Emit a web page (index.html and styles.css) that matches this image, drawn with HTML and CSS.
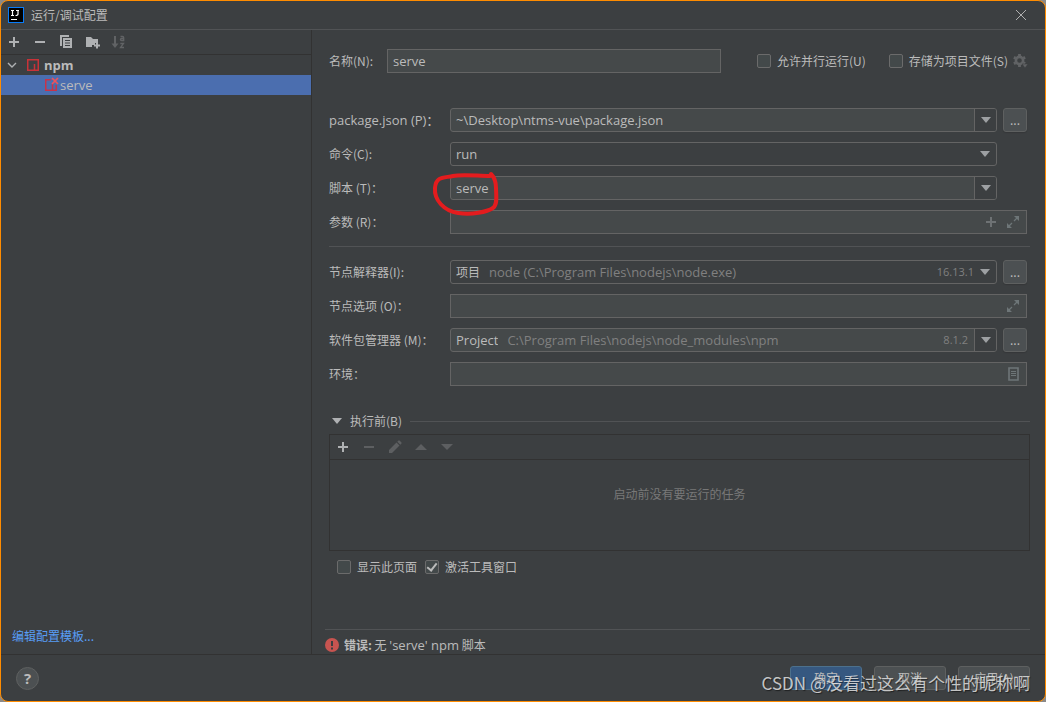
FILE: index.html
```html
<!DOCTYPE html>
<html lang="zh-CN">
<head>
<meta charset="utf-8">
<title>运行/调试配置</title>
<link rel="stylesheet" href="styles.css">
</head>
<body>
<div class="window">
  <header class="titlebar">
    <svg class="logo" width="16" height="16" viewBox="0 0 16 16"><rect width="16" height="16" fill="#087cfa"/><rect x="1" y="1" width="14" height="14" fill="#000"/><path d="M3 3.500h3M4.500 3.500v5M3 8.500h3M8 3.500h3M10 3.500v3.500q0 1.500-2.500 1.500M3 12.500h6" fill="none" stroke="#fff" stroke-width="1.200"/></svg>
    <h1 class="title">运行/调试配置</h1>
    <button class="icon-btn close" aria-label="关闭"><svg width="12" height="12" viewBox="0 0 12 12"><path d="M1 1l10 10M11 1L1 11" stroke="#b0b0b0"/></svg></button>
  </header>

  <div class="body">
    <aside class="sidebar">
      <div class="toolbar">
        <button class="icon-btn" aria-label="添加"><svg width="16" height="16" viewBox="0 0 16 16"><path d="M8 3v10M3 8h10" stroke="#afb1b3" stroke-width="2"/></svg></button>
        <button class="icon-btn" aria-label="移除"><svg width="16" height="16" viewBox="0 0 16 16"><path d="M3 8h10" stroke="#afb1b3" stroke-width="2"/></svg></button>
        <button class="icon-btn" aria-label="复制"><svg width="16" height="16" viewBox="0 0 16 16"><path d="M2 1h9v2H4v9H2z" fill="#afb1b3"/><path fill-rule="evenodd" d="M5 4h9v10H5zM7 6v1h5V6zM7 8.500v1h5v-1zM7 11v1h5v-1z" fill="#afb1b3"/></svg></button>
        <button class="icon-btn" aria-label="新建文件夹"><svg width="16" height="16" viewBox="0 0 16 16"><path d="M2 3h5l2 2h5v4h-3v2H8v2H2z" fill="#afb1b3"/><path d="M13 8.500v6M10 11.500h6" stroke="#afb1b3" stroke-width="2"/></svg></button>
        <button class="icon-btn" aria-label="排序" disabled><svg width="16" height="16" viewBox="0 0 16 16"><path d="M5 2v9" stroke="#616365" stroke-width="2"/><path d="M1.500 9.500h7L5 14z" fill="#616365"/><path d="M10.500 2.500h2q1.200 0 1.200 1.200V6.500h-2q-1.300 0-1.300-1t1.300-1h2M10.300 9.500h3.200L10.500 13.500H14" fill="none" stroke="#616365" stroke-width="1.300"/></svg></button>
      </div>
      <ul class="tree">
        <li class="node">
          <svg class="twisty" width="10" height="10" viewBox="0 0 10 10"><path d="M1 3l4 4 4-4" fill="none" stroke="#afb1b3" stroke-width="1.400"/></svg>
          <svg width="16" height="16" viewBox="0 0 16 16"><path d="M2.750 2.750h10.500v10.500H9.500V7" fill="none" stroke="#c93238" stroke-width="1.500"/><path d="M2.750 2v11.250H10" fill="none" stroke="#c93238" stroke-width="1.500"/></svg>
          <strong>npm</strong>
        </li>
        <li class="node child selected">
          <svg width="16" height="16" viewBox="0 0 16 16"><path d="M8 2.750H2.750v10.500h10.500V8M9.500 13V7" fill="none" stroke="#c93248" stroke-width="1.500"/><path d="M9 1l6 6M15 1L9 7" stroke="#f0525a" stroke-width="1.700"/></svg>
          <span>serve</span>
        </li>
      </ul>
      <a class="link" href="#templates">编辑配置模板...</a>
    </aside>

    <main class="main">
      <div class="name-row">
        <label class="name-label" for="name">名称(N):</label>
        <input class="field name-input" id="name" type="text" value="serve">
        <label class="check parallel"><input type="checkbox">允许并行运行(U)</label>
        <label class="check"><input type="checkbox">存储为项目文件(S)</label>
        <button class="icon-btn gear" aria-label="存储设置" disabled><svg width="16" height="16" viewBox="0 0 16 16"><circle cx="7.500" cy="7.500" r="3.600" fill="none" stroke="#616365" stroke-width="2.600"/><path d="M7.500 1v2M7.500 12v2M1.900 4.250l1.700 1M11.400 9.750l1.700 1M1.900 10.750l1.700-1M11.400 5.250l1.700-1" stroke="#616365" stroke-width="2.800"/><path d="M10 11h6l-3 4z" fill="#616365" stroke="#3c3f41" stroke-width=".6"/></svg></button>
      </div>

      <div class="rows">
        <div class="row">
          <label class="row-label latin" for="pkg">package.json (P)：</label>
          <div class="combo editable">
            <input id="pkg" type="text" value="~\Desktop\ntms-vue\package.json">
            <button class="drop" aria-label="展开"><svg width="10" height="6" viewBox="0 0 10 6"><path d="M0 0h10L5 6z" fill="#9da0a3"/></svg></button>
          </div>
          <button class="more" aria-label="浏览">...</button>
        </div>
        <div class="row">
          <label class="row-label" for="cmd">命令(C):</label>
          <div class="combo">
            <select class="wide" id="cmd"><option>run</option></select>
            <span class="arrow"><svg width="10" height="6" viewBox="0 0 10 6"><path d="M0 0h10L5 6z" fill="#9da0a3"/></svg></span>
          </div>
          <span class="slot"></span>
        </div>
        <div class="row">
          <label class="row-label" for="script">脚本 (T)：</label>
          <div class="combo editable">
            <input id="script" type="text" value="serve">
            <button class="drop" aria-label="展开"><svg width="10" height="6" viewBox="0 0 10 6"><path d="M0 0h10L5 6z" fill="#9da0a3"/></svg></button>
            <svg class="scribble" width="70" height="50" viewBox="0 0 70 50"><path d="M59 4C62 7 64 11 64 18S66 34 61 38C55 42 40 45 26 43S2 30 3 18 12 8 21 6 46 6 58 6" fill="none" stroke="#e41c1e" stroke-width="4" stroke-linecap="round" stroke-linejoin="round"/></svg>
          </div>
          <span class="slot"></span>
        </div>
        <div class="row">
          <label class="row-label" for="args">参数 (R)：</label>
          <div class="combo box">
            <input id="args" type="text">
            <button class="icon-btn" aria-label="插入宏"><svg width="16" height="16" viewBox="0 0 16 16"><path d="M8 3v10M3 8h10" stroke="#6e7274" stroke-width="2"/></svg></button>
            <button class="icon-btn" aria-label="展开输入框"><svg width="16" height="16" viewBox="0 0 16 16"><path d="M9 2h5v5zM2 9v5h5z" fill="#6e7678"/><path d="M12.500 3.500L9 7M3.500 12.500L7 9" stroke="#6e7678" stroke-width="1.300"/></svg></button>
          </div>
        </div>
      </div>

      <hr class="rule">

      <div class="rows">
        <div class="row">
          <label class="row-label" for="node">节点解释器(I):</label>
          <div class="combo">
            <select id="node"><option>项目</option></select>
            <span class="hint">node (C:\Program Files\nodejs\node.exe)</span>
            <span class="version tight">16.13.1</span>
            <span class="arrow"><svg width="10" height="6" viewBox="0 0 10 6"><path d="M0 0h10L5 6z" fill="#9da0a3"/></svg></span>
          </div>
          <button class="more" aria-label="浏览">...</button>
        </div>
        <div class="row">
          <label class="row-label" for="opts">节点选项 (O)：</label>
          <div class="combo box">
            <input id="opts" type="text">
            <button class="icon-btn" aria-label="展开输入框"><svg width="16" height="16" viewBox="0 0 16 16"><path d="M9 2h5v5zM2 9v5h5z" fill="#6e7678"/><path d="M12.500 3.500L9 7M3.500 12.500L7 9" stroke="#6e7678" stroke-width="1.300"/></svg></button>
          </div>
        </div>
        <div class="row">
          <label class="row-label" for="pm">软件包管理器 (M)：</label>
          <div class="combo editable">
            <select id="pm"><option>Project</option></select>
            <span class="hint">C:\Program Files\nodejs\node_modules\npm</span>
            <span class="version">8.1.2</span>
            <button class="drop" aria-label="展开"><svg width="10" height="6" viewBox="0 0 10 6"><path d="M0 0h10L5 6z" fill="#9da0a3"/></svg></button>
          </div>
          <button class="more" aria-label="浏览">...</button>
        </div>
        <div class="row">
          <label class="row-label" for="env">环境：</label>
          <div class="combo box">
            <input id="env" type="text">
            <button class="icon-btn" aria-label="编辑环境变量"><svg width="16" height="16" viewBox="0 0 16 16"><path d="M4 2h9v12H4z" fill="none" stroke="#6e7678" stroke-width="1.600"/><path d="M6 5.500h5M6 7.500h5M6 9.500h5" stroke="#6e7678"/></svg></button>
          </div>
        </div>
      </div>

      <section class="before">
        <h2 class="section-title"><svg width="10" height="6" viewBox="0 0 10 6"><path d="M0 0h10L5 6z" fill="#afb1b3"/></svg><span>执行前(B)</span></h2>
        <div class="tasks">
          <div class="toolbar">
            <button class="icon-btn" aria-label="添加任务"><svg width="16" height="16" viewBox="0 0 16 16"><path d="M8 3v10M3 8h10" stroke="#afb1b3" stroke-width="2"/></svg></button>
            <button class="icon-btn" aria-label="移除任务" disabled><svg width="16" height="16" viewBox="0 0 16 16"><path d="M3 8h10" stroke="#5d5f61" stroke-width="2"/></svg></button>
            <button class="icon-btn" aria-label="编辑任务" disabled><svg width="16" height="16" viewBox="0 0 16 16"><path d="M2 11l7.500-7.500 3 3L5 14H2zM10.300 2.700l1-1q.7-.7 1.400 0l1.600 1.600q.7.700 0 1.400l-1 1z" fill="#5d5f61"/></svg></button>
            <button class="icon-btn" aria-label="上移" disabled><svg width="16" height="16" viewBox="0 0 16 16"><path d="M2 11h12L8 5z" fill="#5d5f61"/></svg></button>
            <button class="icon-btn" aria-label="下移" disabled><svg width="16" height="16" viewBox="0 0 16 16"><path d="M2 5h12l-6 6z" fill="#5d5f61"/></svg></button>
          </div>
          <p class="empty">启动前没有要运行的任务</p>
        </div>
        <div class="checks">
          <label class="check"><input type="checkbox">显示此页面</label>
          <label class="check"><input type="checkbox" checked>激活工具窗口</label>
        </div>
      </section>

      <div class="error" role="alert">
        <svg width="14" height="14" viewBox="0 0 14 14"><circle cx="7" cy="7" r="7" fill="#c75450"/><path d="M7 3v5M7 9.500v2" stroke="#3c3f41" stroke-width="2"/></svg>
        <p><b>错误:</b> 无 <span class="latin">'serve' npm</span> 脚本</p>
      </div>
    </main>
  </div>

  <footer class="footer">
    <button class="help" aria-label="帮助">?</button>
    <button class="btn primary">确定</button>
    <button class="btn">取消</button>
    <button class="btn">应用(A)</button>
    <div class="watermark">CSDN @没看过这么有个性的昵称啊</div>
  </footer>
</div>
</body>
</html>
```

FILE: styles.css
```css
*, ::before, ::after { box-sizing: border-box; }

body {
  margin: 0;
  background: #8c8a88;
  color: #bbbbbb;
  font: 12px/16px "Noto Sans CJK SC", sans-serif;
}

button, input, select { font: inherit; color: inherit; }
h1, h2, p, ul { margin: 0; padding: 0; font-size: inherit; font-weight: normal; }

.window {
  display: flex;
  flex-direction: column;
  min-height: 100vh;
  border: 1px solid #ff8c00;
  border-radius: 8px;
  background: #3c3f41;
  overflow: hidden;
}

.titlebar {
  display: flex;
  align-items: center;
  gap: 7px;
  height: 29px;
  padding: 0 18px 0 7px;
  border-bottom: 1px solid #515355;
}
.title { flex: 1; }

.icon-btn {
  display: flex;
  padding: 0;
  border: 0;
  background: none;
}

.body { display: flex; flex: 1; }

.sidebar {
  display: flex;
  flex-direction: column;
  width: 311px;
  border-right: 1px solid #323232;
}
.toolbar {
  display: flex;
  align-items: center;
  gap: 10px;
  height: 25px;
  padding: 0 5px;
  border-bottom: 1px solid #323232;
}
.tree {
  flex: 1;
  list-style: none;
  font: 13px/18px "Open Sans", sans-serif;
}
.node {
  display: flex;
  align-items: center;
  gap: 3px;
  height: 20px;
  padding-left: 6px;
}
.twisty { margin-right: 5px; }
.child { gap: 1px; padding-left: 42px; }
.selected { background: #4b6eaf; }
.link {
  padding: 0 11px 10px;
  color: #589df6;
  text-decoration: none;
}

.main {
  display: flex;
  flex-direction: column;
  flex: 1;
  min-width: 0;
  padding: 19px 15px 0 17px;
}

.name-row {
  display: flex;
  align-items: center;
  margin-bottom: 35px;
  padding-right: 2px;
}
.name-label { width: 58px; }
.field {
  height: 24px;
  padding: 0 5px;
  border: 1px solid #646464;
  background: #45494a;
  font: 13px/20px "Open Sans", sans-serif;
}
.name-input { flex: 1; min-width: 80px; }
.check { display: flex; align-items: center; gap: 6px; white-space: nowrap; }
.parallel { margin: 0 23px 0 36px; }
.gear { margin-left: 4px; }

input[type="checkbox"] {
  appearance: none;
  width: 14px;
  height: 14px;
  margin: 0;
  border: 1px solid #6b6b6b;
  border-radius: 2px;
  background: #43494a;
}
input[type="checkbox"]:checked::before {
  content: "";
  display: block;
  width: 6px;
  height: 10px;
  margin: 0 0 0 3px;
  border: solid #bbbbbb;
  border-width: 0 2px 2px 0;
  transform: rotate(38deg);
}

.rows {
  display: flex;
  flex-direction: column;
  gap: 10px;
  padding-right: 3px;
}
.row { display: flex; align-items: center; gap: 6px; }
.row-label { width: 115px; white-space: nowrap; }
.latin { font-family: "Open Sans", "Noto Sans CJK SC", sans-serif; font-size: 13px; }

.combo {
  position: relative;
  display: flex;
  flex: 1;
  align-items: center;
  min-width: 0;
  height: 24px;
  border: 1px solid #646464;
  border-radius: 3px;
  font: 13px/20px "Open Sans", "Noto Sans CJK SC", sans-serif;
}
.combo input {
  flex: 1;
  min-width: 0;
  height: 22px;
  padding: 0 5px;
  border: 0;
  background: none;
}
.combo select {
  appearance: none;
  field-sizing: content;
  padding: 0 5px;
  border: 0;
  background: none;
}
.combo .wide { flex: 1; }
#node { font: 12px/20px "Noto Sans CJK SC", sans-serif; }
.editable, .box { background: #45494a; }
.box { gap: 6px; padding-right: 5px; border-radius: 0; }
.hint { flex: 1; padding-left: 4px; white-space: nowrap; color: #808080; }
.version { padding-right: 6px; font-size: 11px; color: #808080; }
.tight { padding-right: 0; }
.arrow, .drop {
  display: flex;
  align-items: center;
  justify-content: center;
  width: 22px;
  height: 22px;
  padding: 0;
}
.drop {
  border: 0;
  border-left: 1px solid #646464;
  border-radius: 0 2px 2px 0;
  background: #3c3f41;
}
.more {
  width: 24px;
  height: 24px;
  padding: 0;
  border: 1px solid #5e6060;
  border-radius: 3px;
  background: #4c5052;
  box-shadow: 0 1px 1px #353739;
}
.slot { width: 24px; }
.scribble { position: absolute; z-index: 1; top: -7px; left: -19px; }

.rule {
  width: 100%;
  margin: 12px 0 13px;
  border: 0;
  border-top: 1px solid #515355;
}

.section-title {
  display: flex;
  align-items: center;
  gap: 8px;
  height: 20px;
  margin-top: 25px;
  padding-left: 3px;
}
.section-title::after { content: ""; flex: 1; height: 1px; background: #515355; }
.tasks { height: 117px; margin-top: 3px; border: 1px solid #323232; }
.empty { padding-top: 26px; text-align: center; color: #787878; }
.checks { display: flex; gap: 8px; margin-top: 8px; padding-left: 8px; }

.error {
  display: flex;
  align-items: center;
  gap: 5px;
  height: 25px;
  margin: auto 0 0 -4px;
  padding-top: 6px;
  border-top: 1px solid #515355;
}

.footer {
  position: relative;
  display: flex;
  align-items: center;
  gap: 12px;
  height: 47px;
  padding: 0 15px;
  border-top: 1px solid #323232;
}
.help {
  width: 23px;
  height: 23px;
  margin-right: auto;
  padding: 0;
  border: 1px solid #5e6060;
  border-radius: 50%;
  background: #4c5052;
  font: bold 15px/20px "Open Sans", sans-serif;
}
.btn {
  width: 72px;
  height: 24px;
  padding: 0;
  border: 1px solid #5e6060;
  border-radius: 3px;
  background: #4c5052;
}
.primary { border-color: #4c708c; background: #365880; }
.watermark {
  position: absolute;
  right: 15px;
  bottom: 6px;
  color: rgba(225, 225, 225, .85);
  font-size: 17px;
  line-height: 24px;
  white-space: nowrap;
  text-shadow: 1px 1px 1px rgba(0, 0, 0, .5);
}
```
